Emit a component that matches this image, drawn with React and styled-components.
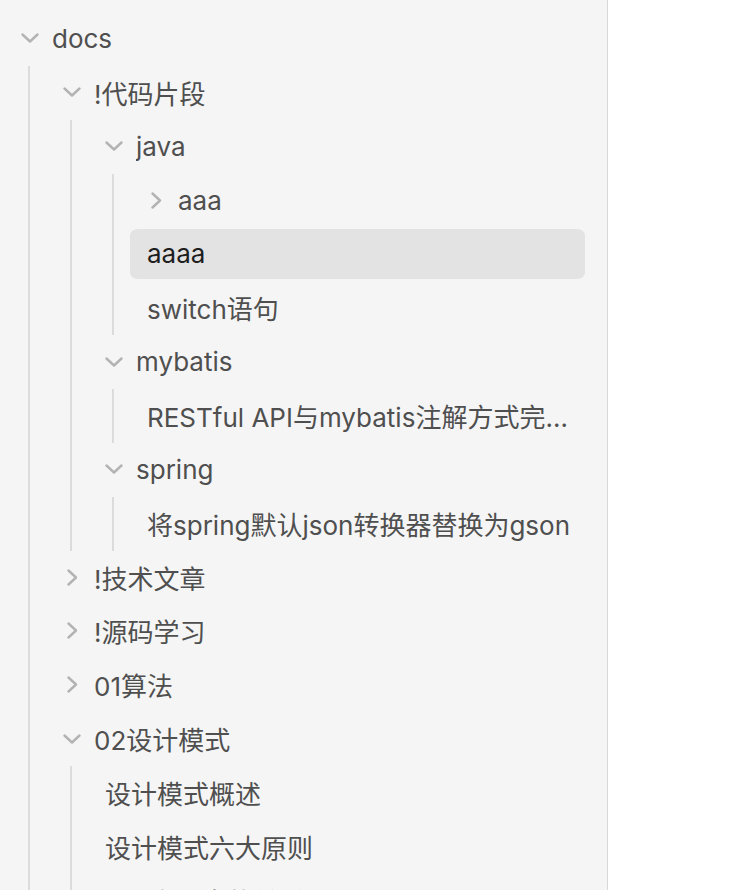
import styled, { createGlobalStyle } from 'styled-components';

const GlobalStyle = createGlobalStyle`
    html, body {
        margin: 0;
        padding: 0;
        background: #ffffff;
    }
    body {
        font-family: Inter, 'Noto Sans CJK SC', sans-serif;
    }
`;

const tree = {
    name: 'docs',
    open: true,
    children: [
        {
            name: '!代码片段',
            open: true,
            children: [
                {
                    name: 'java',
                    open: true,
                    children: [
                        { name: 'aaa', children: [] },
                        { name: 'aaaa', selected: true },
                        { name: 'switch语句' },
                    ],
                },
                {
                    name: 'mybatis',
                    open: true,
                    children: [{ name: 'RESTful API与mybatis注解方式完整示例' }],
                },
                {
                    name: 'spring',
                    open: true,
                    children: [{ name: '将spring默认json转换器替换为gson' }],
                },
            ],
        },
        { name: '!技术文章', children: [] },
        { name: '!源码学习', children: [] },
        { name: '01算法', children: [] },
        {
            name: '02设计模式',
            open: true,
            children: [
                { name: '设计模式概述' },
                { name: '设计模式六大原则' },
                { name: 'uml类图中的关系' },
            ],
        },
    ],
};

const Page = styled.div`
    display: flex;
    height: 890px;
    overflow: hidden;
`;

const Sidebar = styled.aside`
    width: 608px;
    height: 100%;
    box-sizing: border-box;
    background: #f5f5f5;
    border-right: 1px solid #d8d8d8;
    padding: 12px 22px 0 4px;
    overflow: hidden;
`;

const Row = styled.div`
    display: flex;
    align-items: center;
    box-sizing: border-box;
    height: 53.87px;
    border-top: 2px solid transparent;
    border-bottom: 2px solid transparent;
    background-clip: padding-box;
    padding: 0 ${(p) => (p.$leaf ? '4px' : '17px')} 1px 17px;
    border-radius: 8px;
    background-color: ${(p) => (p.$selected ? '#e3e3e3' : 'transparent')};
    color: ${(p) => (p.$selected ? '#1e1e1e' : '#4f4f4f')};
    font-size: 26px;
    white-space: nowrap;
    cursor: default;
`;

const Toggle = styled.span`
    flex: none;
    width: 18px;
    height: 18px;
    margin-right: 13px;
    display: flex;
    align-items: center;
    justify-content: center;
    color: #b3b3b3;
`;

const Label = styled.span`
    overflow: hidden;
    text-overflow: ellipsis;
    min-width: 0;
`;

const Children = styled.div`
    margin-left: 24px;
    border-left: 2px solid #dcdcdc;
    padding-left: 16px;
`;

function Chevron({ open }) {
    return open ? (
        <svg width="18" height="10" viewBox="0 0 18 10" fill="none">
            <polyline points="1.5,1.5 9,8.5 16.5,1.5" stroke="currentColor" strokeWidth="2.4" strokeLinecap="round" strokeLinejoin="round" />
        </svg>
    ) : (
        <svg width="11" height="17" viewBox="0 0 11 17" fill="none">
            <polyline points="1.5,1.5 9,8.5 1.5,15.5" stroke="currentColor" strokeWidth="2.4" strokeLinecap="round" strokeLinejoin="round" />
        </svg>
    );
}

function Node({ node }) {
    const isFolder = Array.isArray(node.children);
    return (
        <>
            <Row $selected={node.selected} $leaf={!isFolder}>
                {isFolder && (
                    <Toggle>
                        <Chevron open={node.open} />
                    </Toggle>
                )}
                <Label>{node.name}</Label>
            </Row>
            {isFolder && node.open && (
                <Children>
                    {node.children.map((child) => (
                        <Node key={child.name} node={child} />
                    ))}
                </Children>
            )}
        </>
    );
}

export default function App() {
    return (
        <Page>
            <GlobalStyle />
            <Sidebar>
                <Node node={tree} />
            </Sidebar>
        </Page>
    );
}
